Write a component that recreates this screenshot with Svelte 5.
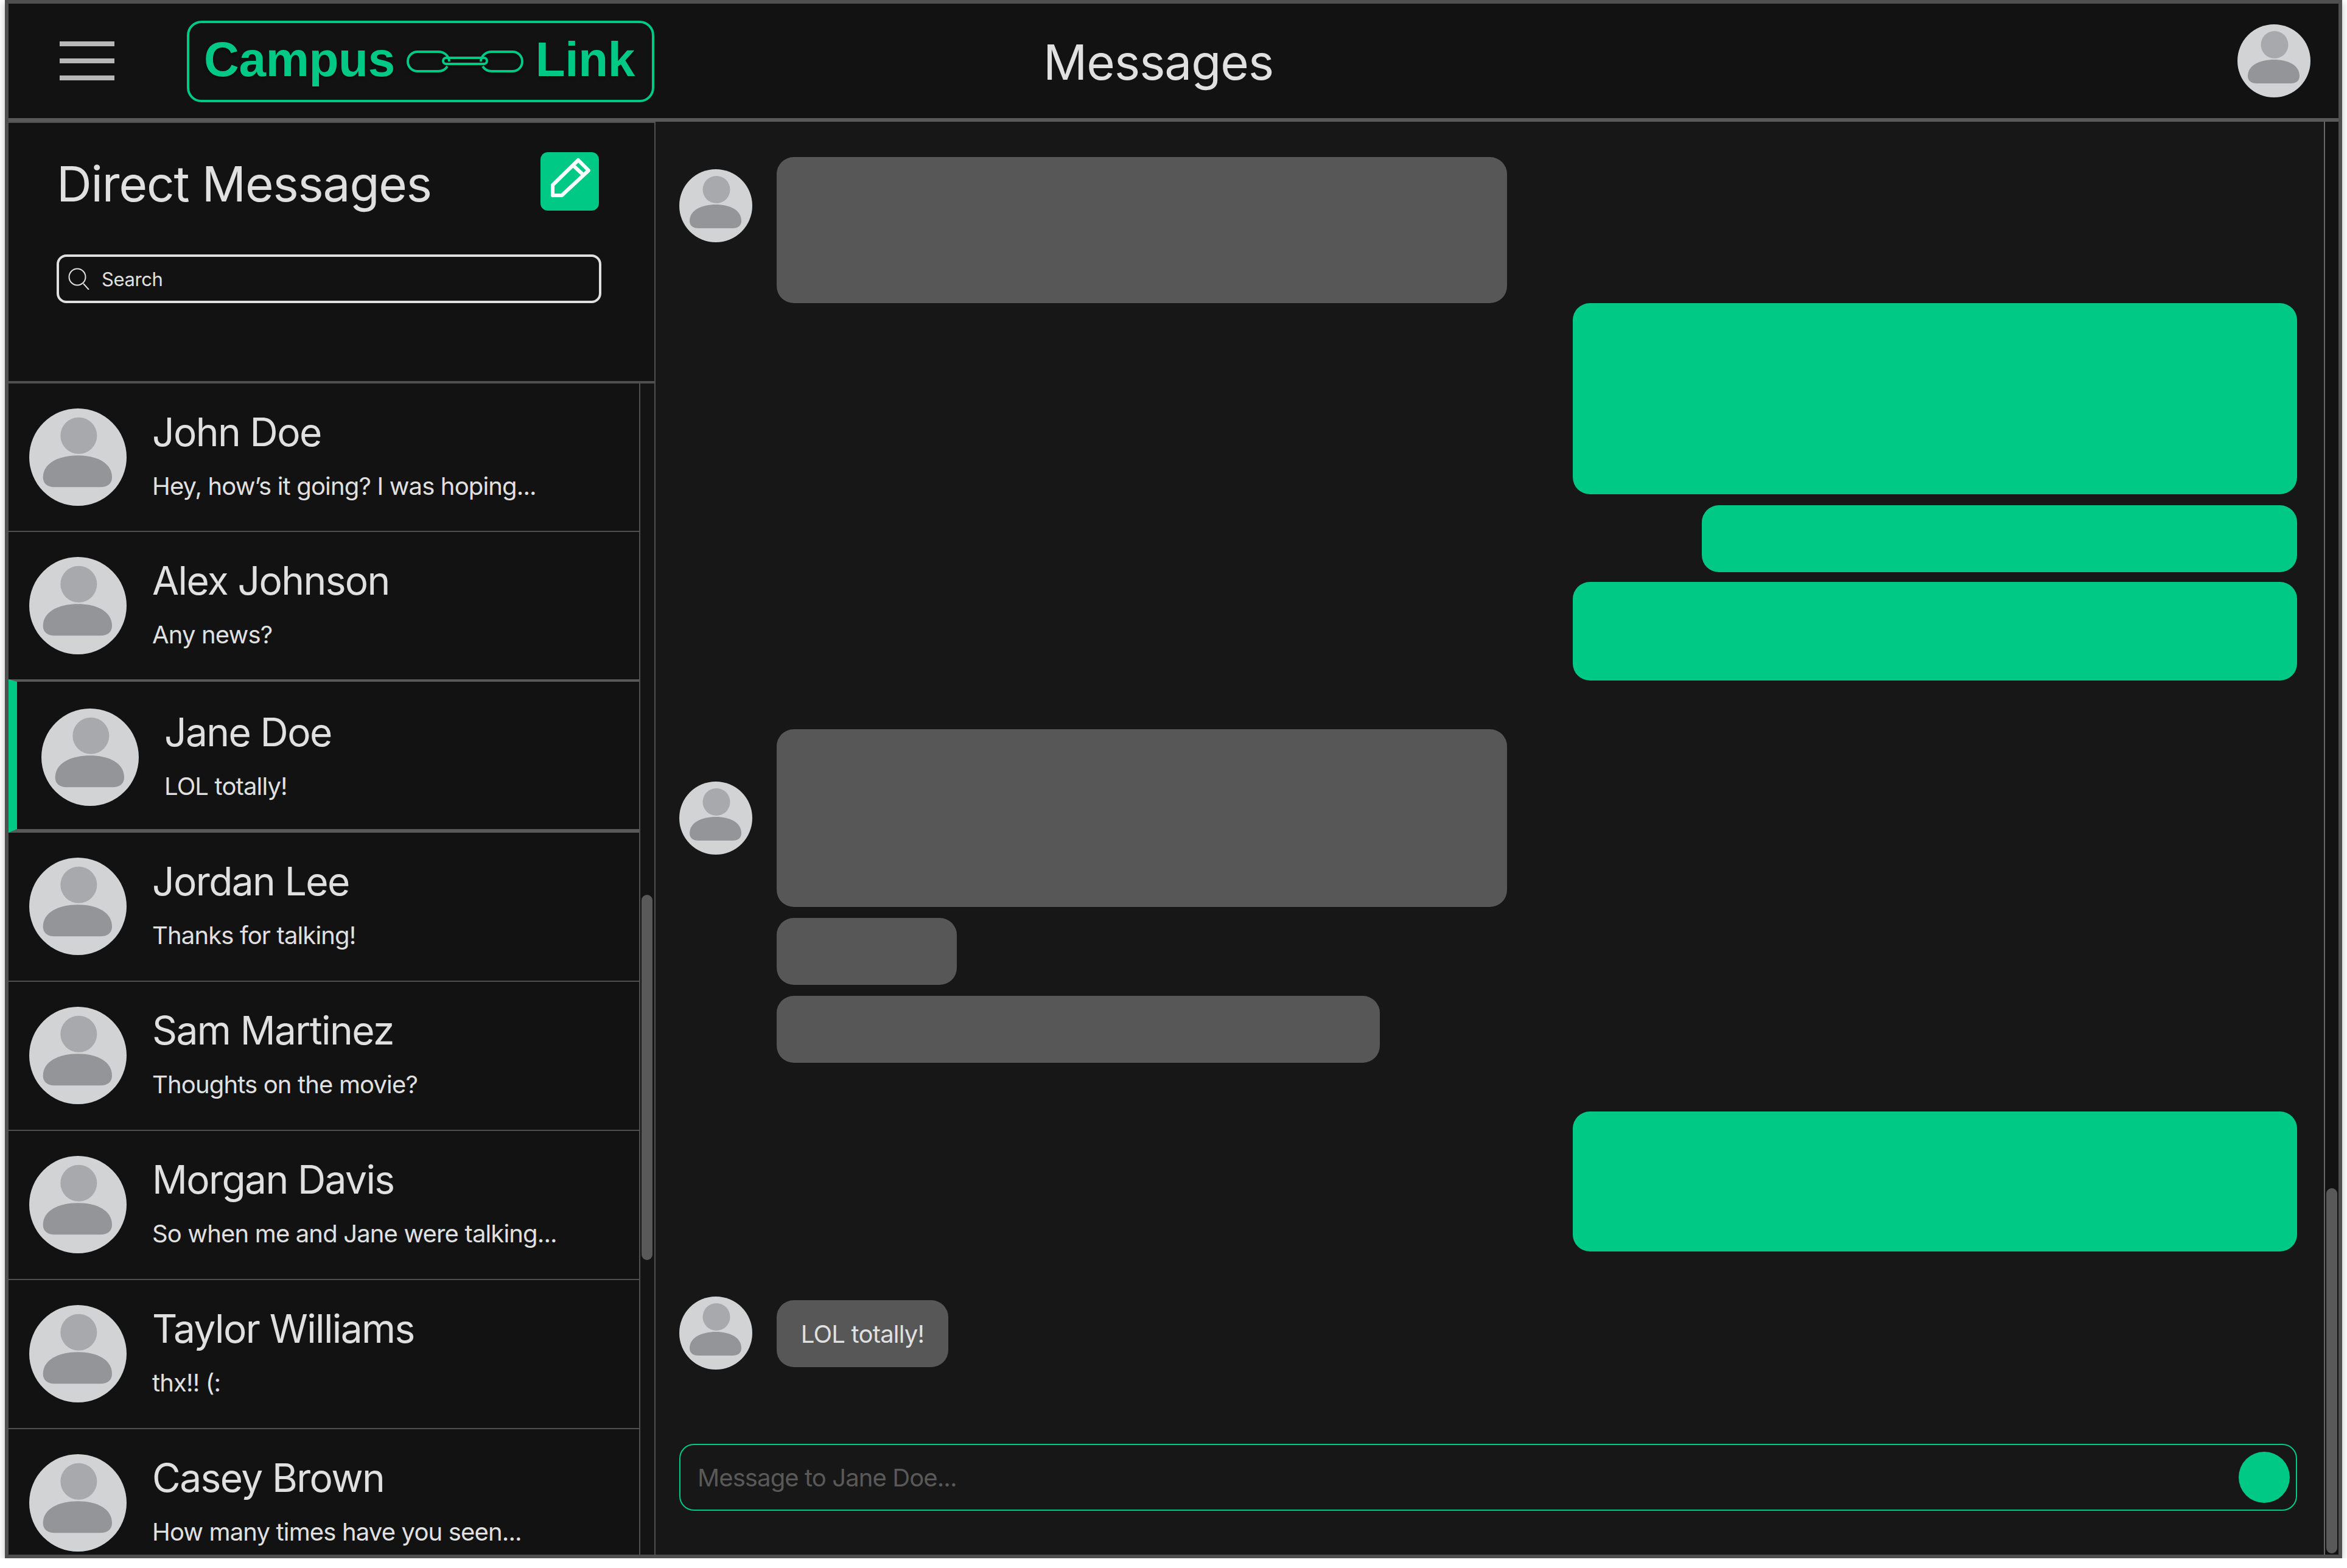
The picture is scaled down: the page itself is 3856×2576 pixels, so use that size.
<script>
  const people = [
    { name: 'John Doe', text: 'Hey, how’s it going? I was hoping...' },
    { name: 'Alex Johnson', text: 'Any news?' },
    { name: 'Jane Doe', text: 'LOL totally!', active: true },
    { name: 'Jordan Lee', text: 'Thanks for talking!' },
    { name: 'Sam Martinez', text: 'Thoughts on the movie?' },
    { name: 'Morgan Davis', text: 'So when me and Jane were talking...' },
    { name: 'Taylor Williams', text: 'thx!! (:' },
    { name: 'Casey Brown', text: 'How many times have you seen...' }
  ];
</script>

{#snippet avatar(cls)}
  <svg class={cls} viewBox="0 0 120 120" aria-hidden="true">
    <circle cx="60" cy="60" r="60" fill="#d1d3d4" />
    <circle cx="61" cy="33.5" r="22.5" fill="#a7a9ac" />
    <path d="M17 85C17 67 37 58 60 58C83 58 102 67 102 85C102 93 96 97 88 97H31C23 97 17 93 17 85Z" fill="#939598" />
  </svg>
{/snippet}

<div class="frame">
  <header class="topbar">
    <div class="burger"><span></span><span></span><span></span></div>
    <div class="logo">
      <span>Campus</span>
      <svg class="chain" viewBox="0 0 192 36" aria-hidden="true">
        <g fill="none" stroke="#00c985" stroke-width="4">
          <rect x="60" y="12" width="72" height="10" rx="5" />
          <path d="M67 26C64 31 58 34 52 34H18C9 34 2 27 2 18C2 9 9 2 18 2H52C62 2 70 9 70 18" />
          <path d="M125 26C128 31 134 34 140 34H174C183 34 190 27 190 18C190 9 183 2 174 2H140C130 2 122 9 122 18" />
        </g>
      </svg>
      <span>Link</span>
    </div>
    <h1>Messages</h1>
    {@render avatar('me')}
  </header>

  <div class="body">
    <aside class="side">
      <div class="side-head">
        <div class="title-row">
          <h2>Direct Messages</h2>
          <button class="compose" aria-label="New message">
            <svg viewBox="0 0 96 96" fill="none" stroke="#fff" stroke-width="6" stroke-linejoin="round">
              <path d="M62 13L79 30L35 71H20V54Z" />
              <path d="M54 22L71 38" />
            </svg>
          </button>
        </div>
        <div class="search">
          <svg viewBox="0 0 40 36" fill="none" stroke="#e0e0e0" stroke-width="2">
            <circle cx="15" cy="15" r="13.5" />
            <path d="M25 26L34 36" />
          </svg>
          <span>Search</span>
        </div>
      </div>
      <div class="list-wrap">
        <ul class="list">
          {#each people as p}
            <li class="row" class:active={p.active}>
              {@render avatar('av')}
              <div class="meta">
                <div class="name">{p.name}</div>
                <div class="prev">{p.text}</div>
              </div>
            </li>
          {/each}
        </ul>
        <div class="track small"><div class="thumb"></div></div>
      </div>
    </aside>

    <main class="chat">
      <div class="thread">
        <div class="group g1">
          {@render avatar('av-s')}
          <div class="bub grey b1"></div>
        </div>
        <div class="stack s1">
          <div class="bub green h314"></div>
          <div class="bub green narrow"></div>
          <div class="bub green h162"></div>
        </div>
        <div class="group g2">
          {@render avatar('av-s')}
          <div class="stack-l">
            <div class="bub grey b2"></div>
            <div class="bub grey b3"></div>
            <div class="bub grey b4"></div>
          </div>
        </div>
        <div class="stack s2">
          <div class="bub green h230"></div>
        </div>
        <div class="group g3">
          {@render avatar('av-s')}
          <div class="bub grey lol">LOL totally!</div>
        </div>
      </div>
      <div class="input">
        <span>Message to Jane Doe...</span>
        <div class="send"></div>
      </div>
    </main>
    <div class="track big"><div class="thumb"></div></div>
  </div>
</div>

<style>
  :global(body) { margin: 0; background: #fff; }
  * { box-sizing: border-box; }

  .frame {
    width: 3840px;
    height: 2560px;
    margin-left: 8px;
    border: 6px solid #4f4f4f;
    box-shadow: 0 4px 12px rgba(0, 0, 0, 0.25);
    display: flex;
    flex-direction: column;
    font-family: Inter, "Liberation Sans", sans-serif;
    color: #e0e0e0;
    overflow: hidden;
    background: #121212;
  }

  .topbar {
    height: 194px;
    flex: none;
    border-bottom: 6px solid #595959;
    background: #121212;
    display: flex;
    align-items: center;
    position: relative;
    padding-left: 84px;
  }
  .burger { width: 90px; display: flex; flex-direction: column; gap: 20px; }
  .burger span { height: 8px; background: #b8b8b8; }

  .logo {
    margin-left: 119px;
    margin-top: 2px;
    width: 768px;
    height: 134px;
    border: 4px solid #00c985;
    border-radius: 24px;
    display: flex;
    align-items: center;
    justify-content: space-between;
    padding: 0 28px 6px 24px;
    font-family: "Liberation Sans", Arial, sans-serif;
    font-weight: 700;
    font-size: 80px;
    letter-spacing: -0.3px;
    color: #00c985;
    text-shadow: 0 3px 4px rgba(0, 0, 0, 0.4);
  }
  .chain { width: 192px; height: 36px; filter: drop-shadow(0 3px 3px rgba(0, 0, 0, 0.4)); margin-top: 6px; }

  h1 {
    position: absolute;
    left: 1700px;
    top: 50%;
    transform: translateY(-50%);
    margin: 1px 0 0;
    font-weight: 400;
    font-size: 80px;
    letter-spacing: -1px;
    white-space: nowrap;
  }
  .me { position: absolute; right: 46px; top: 34px; width: 120px; height: 120px; }

  .body { flex: 1; min-height: 0; display: flex; background: #171717; }

  .side {
    width: 1063px;
    flex: none;
    border-top: 2px solid #4f4f4f;
    border-right: 2px solid #4f4f4f;
    background: #121212;
    display: flex;
    flex-direction: column;
  }
  .side-head { height: 428px; flex: none; padding: 48px 0 0 79px; border-bottom: 4px solid #4f4f4f; }
  .title-row { display: flex; justify-content: space-between; width: 891px; align-items: flex-start; }
  h2 { margin: 4px 0 0; font-weight: 400; font-size: 80px; line-height: 96px; letter-spacing: -1.15px; }
  .compose { width: 96px; height: 96px; border: 0; padding: 0; background: #00c985; border-radius: 12px; }
  .compose svg { display: block; width: 96px; height: 96px; }

  .search {
    margin-top: 68px;
    width: 895px;
    height: 80px;
    border: 4px solid #e0e0e0;
    border-radius: 16px;
    display: flex;
    align-items: center;
    padding-left: 15px;
    gap: 15px;
    font-size: 31px;
    letter-spacing: -0.4px;
  }
  .search svg { width: 40px; height: 36px; }

  .list-wrap { flex: 1; min-height: 0; display: flex; }
  .list {
    list-style: none;
    margin: 0;
    padding: 0;
    flex: 1;
    min-width: 0;
    border-right: 2px solid #4f4f4f;
    overflow: hidden;
  }
  .row {
    height: 244px;
    border-bottom: 2px solid #4f4f4f;
    padding-left: 34px;
    display: flex;
    align-items: center;
    gap: 42px;
  }
  .row.active ~ .row { height: 245px; padding-bottom: 2px; }
  .row.active {
    border-left: 14px solid #00c985;
    border-top: 4px solid #595959;
    border-bottom: 6px solid #595959;
    margin-top: -2px;
    height: 252px;
    padding-left: 40px;
    padding-top: 6px;
  }
  .av { width: 160px; height: 160px; flex: none; }
  .meta { display: flex; flex-direction: column; padding-bottom: 8px; }
  .name { font-size: 64px; line-height: 78px; letter-spacing: -1.6px; }
  .prev { font-size: 40px; line-height: 48px; margin-top: 26px; letter-spacing: -0.85px; }

  .track { flex: none; background: #141414; position: relative; }
  .track.small { width: 23px; }
  .track.small .thumb { position: absolute; left: 2px; top: 840px; width: 18px; height: 600px; }
  .track.big { width: 24px; border-left: 2px solid #666; background: #121212; }
  .track.big .thumb { position: absolute; left: 2px; top: 1752px; width: 18px; height: 600px; }
  .thumb { background: #595959; border-radius: 9px; }

  .chat { flex: 1; min-width: 0; display: flex; flex-direction: column; padding: 0 44px 0 39px; position: relative; }
  .thread { flex: 1; min-height: 0; display: flex; flex-direction: column; padding-top: 58px; }

  .group { display: flex; gap: 40px; align-items: flex-start; }
  .av-s { width: 120px; height: 120px; flex: none; }
  .bub { border-radius: 28px; }
  .grey { background: #575757; }
  .green { background: #00c985; width: 1190px; }
  .g1 .av-s { margin-top: 20px; }
  .b1 { width: 1200px; height: 240px; }
  .stack { display: flex; flex-direction: column; align-items: flex-end; }
  .h314 { height: 314px; }
  .narrow { width: 978px; height: 110px; margin-top: 18px; }
  .h162 { height: 162px; margin-top: 16px; }
  .g2 { margin-top: 80px; }
  .g2 .av-s { margin-top: 86px; }
  .stack-l { display: flex; flex-direction: column; gap: 18px; }
  .b2 { width: 1200px; height: 292px; }
  .b3 { width: 296px; height: 110px; }
  .b4 { width: 991px; height: 110px; }
  .s2 { margin-top: 80px; }
  .h230 { height: 230px; }
  .g3 { margin-top: 74px; }
  .lol {
    margin-top: 6px;
    width: 282px;
    height: 110px;
    display: flex;
    align-items: center;
    justify-content: center;
    font-size: 40px;
    letter-spacing: -0.8px;
    color: #e0e0e0;
  }

  .input {
    flex: none;
    margin-bottom: 72px;
    height: 110px;
    border: 2px solid #00c985;
    border-radius: 24px;
    display: flex;
    align-items: center;
    justify-content: space-between;
    padding: 0 10px 0 28px;
    font-size: 40px;
    letter-spacing: -0.9px;
    color: #595959;
  }
  .send { width: 84px; height: 84px; border-radius: 50%; background: #00c985; }
</style>
